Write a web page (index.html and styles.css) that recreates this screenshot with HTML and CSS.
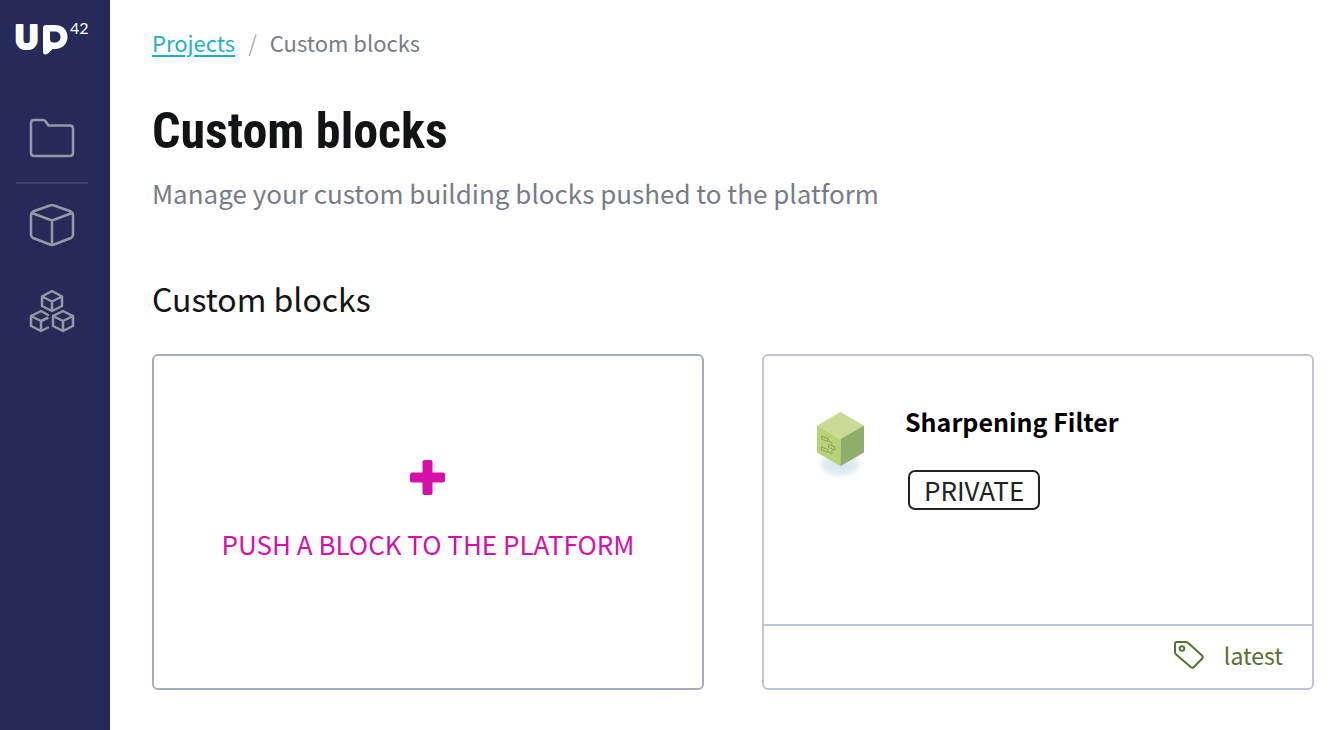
FILE: index.html
```html
<!DOCTYPE html>
<html lang="en">
<head>
<meta charset="utf-8">
<meta name="viewport" content="width=device-width, initial-scale=1">
<title>Custom blocks</title>
<link rel="stylesheet" href="styles.css">
</head>
<body>
<div class="app">
  <aside class="sidebar">
    <a class="logo" href="#" aria-label="UP42 home">
      <svg width="74" height="42" viewBox="0 0 74 42">
        <text class="logo-word" x="-1" y="30">U</text>
        <path class="logo-bubble" fill-rule="evenodd" d="M30 6H39C47 6 51.500 11 51.500 18C51.500 25 46 30 39 30H36.500L32 34.500Q27 37.500 27 32V9Q27 6 30 6ZM34 13V20Q34 23.500 37.500 23.500H39C42.500 23.500 44.500 21 44.500 18C44.500 15 42.500 12.500 39 12.500H34Z"/>
        <text class="logo-number" x="54" y="15">42</text>
      </svg>
    </a>
    <nav class="side-nav" aria-label="Main">
      <a class="side-link" href="#" aria-label="Projects">
        <svg width="46" height="42" viewBox="0 0 46 42"><path d="M5 2H14Q15.500 2 16.500 3.200L19.500 7.500H41Q44 7.500 44 10.500V35Q44 38 41 38H5Q2 38 2 35V5Q2 2 5 2Z"/></svg>
      </a>
      <hr class="side-rule">
      <a class="side-link" href="#" aria-label="Blocks">
        <svg width="46" height="44" viewBox="0 0 46 44"><path d="M21 2.500Q23 1.700 25 2.500L42 8.500Q44 9.500 44 11.500V32Q44 34 42 35L25 41.500Q23 42.300 21 41.500L4 35Q2 34 2 32V11.500Q2 9.500 4 8.500ZM2.800 10L23 17.500L43.200 10M23 17.500V42"/></svg>
      </a>
      <a class="side-link" href="#" aria-label="Custom blocks">
        <svg width="46" height="44" viewBox="0 0 46 44"><path d="M23 2L33 7.500V17L23 22L13 17V7.500ZM13 7.500L23 12.500L33 7.500M23 12.500V22M34 22L44 27V37L34 42L24 37V27ZM24 27L34 32L44 27M34 32V42M19 26L12 22L2 27V37L12 42L19 38.500M2 27L12 32L18.500 29M12 32V42"/></svg>
      </a>
    </nav>
  </aside>
  <main class="content">
    <nav class="breadcrumb" aria-label="Breadcrumb">
      <a class="crumb-link" href="#">Projects</a>
      <span class="crumb-sep">/</span>
      <span>Custom blocks</span>
    </nav>
    <h1 class="page-title">Custom blocks</h1>
    <p class="page-lead">Manage your custom building blocks pushed to the platform</p>
    <h2 class="section-title">Custom blocks</h2>
    <div class="cards">
      <button class="card push-card" type="button">
        <svg width="36" height="36" viewBox="0 0 36 36" aria-hidden="true"><rect x="12.500" y="0" width="10" height="35" rx="2"/><rect x="0" y="12.500" width="35" height="10" rx="2"/></svg>
        <span>PUSH A BLOCK TO THE PLATFORM</span>
      </button>
      <article class="card block-card">
        <div class="block-body">
          <svg class="block-icon" width="60" height="76" viewBox="0 0 60 76" aria-hidden="true">
            <defs><radialGradient id="shade"><stop offset="0" stop-color="#d3e3ea"/><stop offset="0.600" stop-color="#e6eff3"/><stop offset="1" stop-color="#fff" stop-opacity="0"/></radialGradient></defs>
            <ellipse cx="30" cy="54" rx="27" ry="17" fill="url(#shade)"/>
            <path fill="#c8dc96" d="M30.500 2L54 15.500L30.500 29L7 15.500Z"/>
            <path fill="#b7d376" d="M7 15.500L30.500 29V56L7 42.500Z"/>
            <path fill="#90ae6b" d="M54 15.500L30.500 29V56L54 42.500Z"/>
            <path fill="none" stroke="#7f9a55" stroke-width="1" stroke-dasharray="2 0.500" d="M11.500 26L18 28.500V31.500L11.500 29ZM18.500 34.500L25 37V40L18.500 37.500ZM11.500 37L18 39.500V42.500L11.500 40ZM19 31L22 33V35.500M19 42L22 43.500V40"/>
          </svg>
          <div class="block-info">
            <h3 class="block-name">Sharpening Filter</h3>
            <span class="badge">PRIVATE</span>
          </div>
        </div>
        <footer class="block-footer">
          <svg width="32" height="30" viewBox="0 0 32 30" aria-hidden="true"><path d="M4 2H12Q14 2 15.500 3.200L29 15.500Q30.500 17 29.200 18.500L21 27Q19.500 28.500 18 27.300L3.200 14.500Q2 13.300 2 12V4Q2 2 4 2Z"/><circle cx="9" cy="8.500" r="2.300"/></svg>
          <span>latest</span>
        </footer>
      </article>
    </div>
  </main>
</div>
</body>
</html>
```
FILE: styles.css
```css
* { box-sizing: border-box; }
body {
  margin: 0;
  background: #fff;
  color: #111315;
  font-family: "Source Sans Pro", "Noto Sans CJK SC", sans-serif;
}
h1, h2, h3, p { margin: 0; }
svg { display: block; flex: none; }
.app { display: flex; min-height: 100vh; }
.sidebar {
  flex: none;
  width: 110px;
  padding: 19px 20px 0 16px;
  background: #262a59;
}
.logo { display: block; }
.logo svg { overflow: visible; }
.logo-word {
  font: 800 32px Inter, sans-serif;
  fill: #fff;
  stroke: #fff;
  stroke-width: 2;
  stroke-linejoin: round;
}
.logo-bubble { fill: #fff; }
.logo-number { font: 16px Lato, sans-serif; fill: #fff; }
.side-nav {
  display: flex;
  flex-direction: column;
  align-items: center;
  width: 72px;
  margin-top: 57px;
}
.side-link { padding-bottom: 42px; }
.side-link:first-child { padding-bottom: 22px; }
.side-link path {
  fill: none;
  stroke: #929aa3;
  stroke-width: 2.5;
  stroke-linejoin: round;
  stroke-linecap: round;
}
.side-rule {
  width: 100%;
  height: 2px;
  margin: 0 0 19px;
  border: 0;
  background: #3d416b;
}
.content {
  flex: 1;
  min-width: 0;
  padding: 26px 28px 40px 42px;
}
.breadcrumb {
  display: flex;
  gap: 13px;
  color: #777c87;
  font-size: 22px;
  line-height: 32px;
}
.crumb-link {
  color: #1fb0c6;
  text-decoration-thickness: 2px;
  text-underline-offset: 3px;
}
.crumb-sep { color: #a9afbc; }
.page-title {
  margin-top: 43px;
  font: 700 50px/60px "Roboto Condensed", Roboto, sans-serif;
}
.page-lead {
  margin-top: 12px;
  color: #777c87;
  font-size: 26px;
  line-height: 40px;
}
.section-title {
  margin-top: 60px;
  font-size: 32px;
  font-weight: 400;
  line-height: 50px;
}
.cards {
  display: grid;
  grid-template-columns: 1fr 1fr;
  gap: 58px;
  margin-top: 31px;
}
.card {
  min-height: 336px;
  border: 2px solid #c1c5d1;
  border-radius: 6px;
  background: #fff;
}
.push-card {
  display: flex;
  flex-direction: column;
  align-items: center;
  justify-content: center;
  gap: 28px;
  padding: 0 0 21px;
  border-color: #a9adba;
  color: #d60fa9;
  font: 400 26px/40px "Source Sans Pro", "Noto Sans CJK SC", sans-serif;
}
.push-card svg { fill: #d60fa9; }
.block-card { display: flex; flex-direction: column; }
.block-body {
  display: flex;
  flex: 1;
  gap: 35px;
  padding: 45px 46px 40px;
}
.block-icon { margin-top: 9px; }
.block-name {
  color: #000;
  font-size: 25px;
  font-weight: 700;
  line-height: 40px;
}
.badge {
  display: inline-block;
  margin: 29px 0 0 3px;
  padding: 0 14px;
  border: 2px solid #202224;
  border-radius: 7px;
  color: #202224;
  font-size: 26px;
  line-height: 36px;
}
.block-footer {
  display: flex;
  align-items: center;
  justify-content: flex-end;
  gap: 19px;
  height: 64px;
  padding: 0 29px 5px;
  border-top: 2px solid #c1c5d1;
  color: #557330;
  font-size: 23px;
  line-height: 32px;
}
.block-footer svg {
  fill: none;
  stroke: #557330;
  stroke-width: 2;
}
```
